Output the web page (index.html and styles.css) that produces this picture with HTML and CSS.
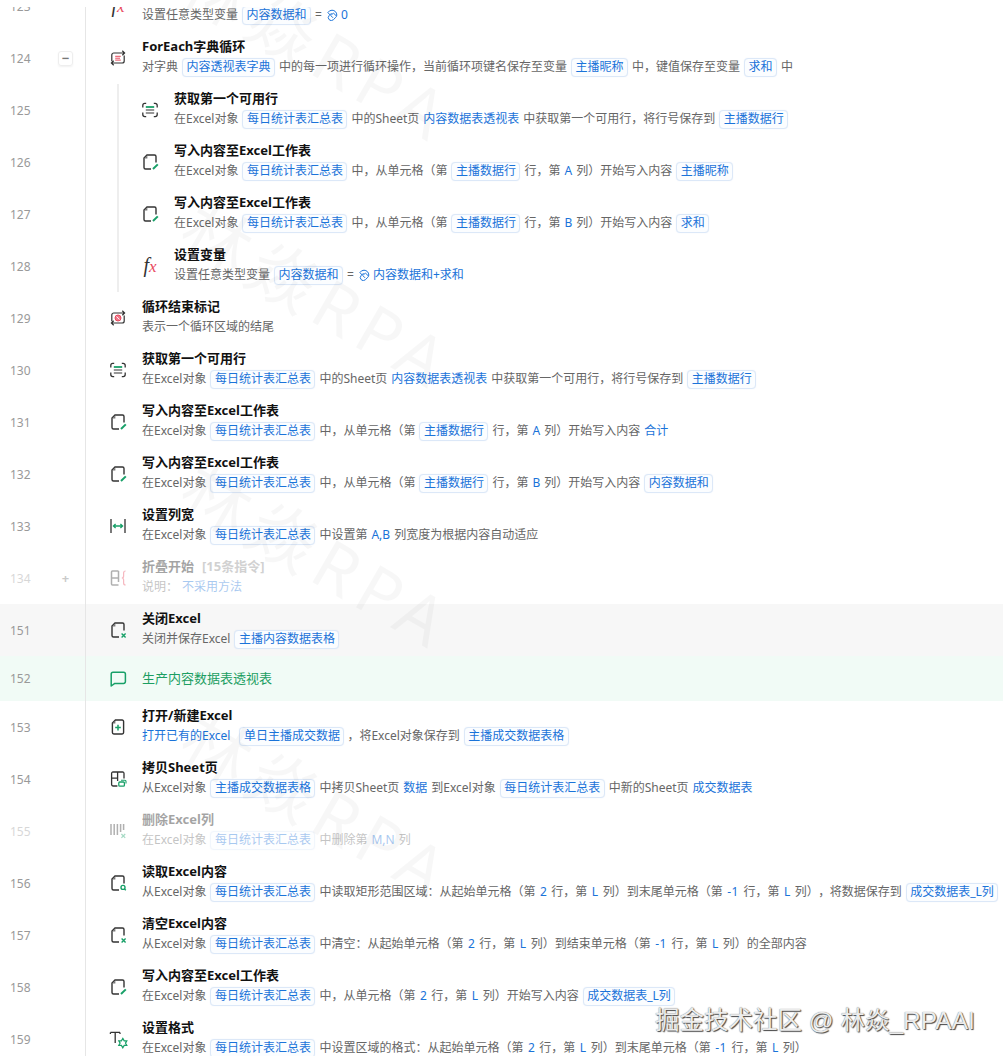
FILE: index.html
```html
<!DOCTYPE html>
<html lang="zh">
<head>
<meta charset="utf-8">
<title>流程指令列表</title>
<link rel="stylesheet" href="styles.css">
</head>
<body>
<svg class="sprite" xmlns="http://www.w3.org/2000/svg">
  <symbol id="swirl" viewBox="0 0 12 12"><path d="M6 1.200A4.800 4.800 0 0 1 10.800 6c0 .9-.4 1.700-1 2.300L7.400 10.700a3 3 0 0 1-4.200 0 3 3 0 0 1 0-4.200L5.600 4.100M6 1.200A4.800 4.800 0 0 0 1.900 3.600L4.200 6M10 6.600 7.400 4 4.800 6.600 7 8.800" fill="none" stroke="#1a73d9" stroke-width="1"/></symbol>
  <symbol id="doc" viewBox="0 0 20 20"><path d="M11 17H5.500A1.500 1.500 0 0 1 4 15.500V6l3-3h7.500A1.500 1.500 0 0 1 16 4.500V10.500" fill="none" stroke="#333" stroke-width="1.400"/><path d="M4.200 6.400 7.400 3.200V6.400z" fill="#777"/></symbol>
  <symbol id="doc-pen" viewBox="0 0 20 20"><use href="#doc"/><path d="M13 17 17.800 12.400" stroke="#18a068" stroke-width="2"/></symbol>
  <symbol id="doc-x" viewBox="0 0 20 20"><use href="#doc"/><path d="M13.600 13.400 17.600 17.400M17.600 13.400 13.600 17.400" stroke="#18a068" stroke-width="1.400"/></symbol>
  <symbol id="doc-q" viewBox="0 0 20 20"><use href="#doc"/><circle cx="15" cy="14.400" r="2" fill="none" stroke="#18a068" stroke-width="1.400"/><path d="M16.500 15.900 17.800 17.200" stroke="#18a068" stroke-width="1.400"/></symbol>
  <symbol id="doc-plus" viewBox="0 0 20 20"><path d="M7.400 3H14.200A1.400 1.400 0 0 1 15.600 4.400V15.600A1.400 1.400 0 0 1 14.200 17H5.800A1.400 1.400 0 0 1 4.400 15.600V6z" fill="none" stroke="#333" stroke-width="1.400"/><path d="M4.600 6.400 7.400 3.400V6.400z" fill="#777"/><path d="M10 7.800v5.600M7.200 10.600h5.600" stroke="#18a068" stroke-width="1.500"/></symbol>
  <symbol id="sheet" viewBox="0 0 20 20"><path d="M9.400 17H5A1.400 1.400 0 0 1 3.600 15.600V4.400A1.400 1.400 0 0 1 5 3h9.600A1.400 1.400 0 0 1 16 4.400V9.600M3.800 9.200H9.600M9.600 3.200V12" fill="none" stroke="#333" stroke-width="1.300"/><rect x="10.800" y="13" width="5.600" height="4.200" rx="1" fill="none" stroke="#18a068" stroke-width="1.300"/><path d="M13 11.200h3.800a1.200 1.200 0 0 1 1.200 1.200v2.200" fill="none" stroke="#18a068" stroke-width="1.100"/></symbol>
  <symbol id="loop" viewBox="0 0 20 20"><path d="M3.800 13.200V7a2 2 0 0 1 2-2H16.400M14.300 2.800 16.600 5 14.300 7.200M16.200 7.400V13a2 2 0 0 1-2 2H3.600M5.700 12.800 3.400 15l2.300 2.200" fill="none" stroke="#333" stroke-width="1.200"/><path d="M7.200 8.300h5.600M7.200 10.200h4.800M7.200 12.100h5.600" stroke="#e8485c" stroke-width="1"/></symbol>
  <symbol id="loop-end" viewBox="0 0 20 20"><path d="M3.800 13.200V7a2 2 0 0 1 2-2H16.400M14.300 2.800 16.600 5 14.300 7.200M16.200 7.400V13a2 2 0 0 1-2 2H3.600M5.700 12.800 3.400 15l2.300 2.200" fill="none" stroke="#333" stroke-width="1.200"/><circle cx="10" cy="10" r="3" fill="#f0778a" stroke="#e8485c"/><path d="M8.500 8.500l3 3" stroke="#fff" stroke-width=".9"/></symbol>
  <symbol id="scan" viewBox="0 0 20 20"><path d="M2.800 7.400V5.400A2 2 0 0 1 4.800 3.400H6.200M13.800 3.400h1.400a2 2 0 0 1 2 2V7.400M2.800 12.600v2a2 2 0 0 0 2 2H6.200M13.800 16.600h1.400a2 2 0 0 0 2-2V12.600" fill="none" stroke="#333" stroke-width="1.300"/><path d="M5.800 7h8.400" stroke="#18a068" stroke-width="1.800"/><path d="M5.800 10h8.400M5.800 13h8.400" stroke="#333" stroke-width="1.200"/></symbol>
  <symbol id="width" viewBox="0 0 20 20"><path d="M3 3v14M17 3v14" stroke="#333" stroke-width="1.300"/><path d="M5.400 10h9.200M7.600 8 5.400 10l2.200 2M12.400 8l2.200 2-2.200 2" fill="none" stroke="#18a068" stroke-width="1.300"/></symbol>
  <symbol id="fold" viewBox="0 0 20 20"><path d="M10.500 3H4.500A1 1 0 0 0 3.500 4V16a1 1 0 0 0 1 1H10.500M3.500 10H10.500M10.500 3V10M10.500 10V14" fill="none" stroke="#333" stroke-width="1.500"/><path d="M17.600 3c-1.500 0-2 .6-2 2v3c0 1-.6 2-1.800 2 1.200 0 1.800 1 1.800 2v3c0 1.400.5 2 2 2" fill="none" stroke="#e8485c" stroke-width="1.200"/></symbol>
  <symbol id="delcol" viewBox="0 0 20 20"><path d="M3 3v11M6.200 3v11M9.400 3v11M12.600 3v8M15.600 3v6" stroke="#333" stroke-width="1.500"/><path d="M13.400 13l3.800 3.800M17.200 13l-3.800 3.800" stroke="#18a068" stroke-width="1.200"/></symbol>
  <symbol id="comment" viewBox="0 0 20 20"><path d="M5 3.200h10.600a1.800 1.800 0 0 1 1.800 1.800v7.600a1.800 1.800 0 0 1-1.800 1.800H6.800L3.200 17V5A1.800 1.800 0 0 1 5 3.200z" fill="none" stroke="#18a068" stroke-width="1.500" stroke-linejoin="round"/></symbol>
  <symbol id="format" viewBox="0 0 20 20"><path d="M2.400 3.400h9.600M2.400 3.400v1.600M12 3.400v1.600M7.200 3.400V14" fill="none" stroke="#333" stroke-width="1.300"/><path d="M14.800 9.400l1.400 2.400h2.600l-1.300 2.300 1.300 2.300h-2.600l-1.400 2.400-1.400-2.400h-2.600l1.300-2.300-1.300-2.300h2.600z" fill="none" stroke="#18a068" stroke-width="1.200"/></symbol>
</svg>

<main class="viewport">
  <div class="list">

    <div class="row">
      <div class="gutter"><span class="num">123</span></div>
      <div class="ico"><span class="fx"><i>f</i><b>x</b></span></div>
      <div class="content">
        <div class="title">设置变量</div>
        <div class="desc">设置任意类型变量<span class="tag">内容数据和</span><span class="eq">=</span><svg class="swirl"><use href="#swirl"/></svg><span class="val tight">0</span></div>
      </div>
    </div>

    <div class="row">
      <div class="gutter"><span class="num">124</span><span class="toggle boxed">−</span></div>
      <div class="ico"><svg class="icon"><use href="#loop"/></svg></div>
      <div class="content">
        <div class="title">ForEach字典循环</div>
        <div class="desc">对字典<span class="tag">内容透视表字典</span>中的每一项进行循环操作，当前循环项键名保存至变量<span class="tag">主播昵称</span>中，键值保存至变量<span class="tag">求和</span>中</div>
      </div>
    </div>

    <div class="row nested">
      <div class="gutter"><span class="num">125</span></div>
      <div class="ico"><svg class="icon"><use href="#scan"/></svg></div>
      <div class="content">
        <div class="title">获取第一个可用行</div>
        <div class="desc">在Excel对象<span class="tag">每日统计表汇总表</span>中的Sheet页<span class="val">内容数据表透视表</span>中获取第一个可用行，将行号保存到<span class="tag">主播数据行</span></div>
      </div>
    </div>

    <div class="row nested">
      <div class="gutter"><span class="num">126</span></div>
      <div class="ico"><svg class="icon"><use href="#doc-pen"/></svg></div>
      <div class="content">
        <div class="title">写入内容至Excel工作表</div>
        <div class="desc">在Excel对象<span class="tag">每日统计表汇总表</span>中，从单元格（第<span class="tag">主播数据行</span>行，第<span class="val">A</span>列）开始写入内容<span class="tag">主播昵称</span></div>
      </div>
    </div>

    <div class="row nested">
      <div class="gutter"><span class="num">127</span></div>
      <div class="ico"><svg class="icon"><use href="#doc-pen"/></svg></div>
      <div class="content">
        <div class="title">写入内容至Excel工作表</div>
        <div class="desc">在Excel对象<span class="tag">每日统计表汇总表</span>中，从单元格（第<span class="tag">主播数据行</span>行，第<span class="val">B</span>列）开始写入内容<span class="tag">求和</span></div>
      </div>
    </div>

    <div class="row nested">
      <div class="gutter"><span class="num">128</span></div>
      <div class="ico"><span class="fx"><i>f</i><b>x</b></span></div>
      <div class="content">
        <div class="title">设置变量</div>
        <div class="desc">设置任意类型变量<span class="tag">内容数据和</span><span class="eq">=</span><svg class="swirl"><use href="#swirl"/></svg><span class="val tight">内容数据和+求和</span></div>
      </div>
    </div>

    <div class="row">
      <div class="gutter"><span class="num">129</span></div>
      <div class="ico"><svg class="icon"><use href="#loop-end"/></svg></div>
      <div class="content">
        <div class="title">循环结束标记</div>
        <div class="desc">表示一个循环区域的结尾</div>
      </div>
    </div>

    <div class="row">
      <div class="gutter"><span class="num">130</span></div>
      <div class="ico"><svg class="icon"><use href="#scan"/></svg></div>
      <div class="content">
        <div class="title">获取第一个可用行</div>
        <div class="desc">在Excel对象<span class="tag">每日统计表汇总表</span>中的Sheet页<span class="val">内容数据表透视表</span>中获取第一个可用行，将行号保存到<span class="tag">主播数据行</span></div>
      </div>
    </div>

    <div class="row">
      <div class="gutter"><span class="num">131</span></div>
      <div class="ico"><svg class="icon"><use href="#doc-pen"/></svg></div>
      <div class="content">
        <div class="title">写入内容至Excel工作表</div>
        <div class="desc">在Excel对象<span class="tag">每日统计表汇总表</span>中，从单元格（第<span class="tag">主播数据行</span>行，第<span class="val">A</span>列）开始写入内容<span class="val">合计</span></div>
      </div>
    </div>

    <div class="row">
      <div class="gutter"><span class="num">132</span></div>
      <div class="ico"><svg class="icon"><use href="#doc-pen"/></svg></div>
      <div class="content">
        <div class="title">写入内容至Excel工作表</div>
        <div class="desc">在Excel对象<span class="tag">每日统计表汇总表</span>中，从单元格（第<span class="tag">主播数据行</span>行，第<span class="val">B</span>列）开始写入内容<span class="tag">内容数据和</span></div>
      </div>
    </div>

    <div class="row">
      <div class="gutter"><span class="num">133</span></div>
      <div class="ico"><svg class="icon"><use href="#width"/></svg></div>
      <div class="content">
        <div class="title">设置列宽</div>
        <div class="desc">在Excel对象<span class="tag">每日统计表汇总表</span>中设置第<span class="val">A,B</span>列宽度为根据内容自动适应</div>
      </div>
    </div>

    <div class="row off">
      <div class="gutter"><span class="num">134</span><span class="toggle">+</span></div>
      <div class="ico"><svg class="icon"><use href="#fold"/></svg></div>
      <div class="content">
        <div class="title">折叠开始<span class="count">[15条指令]</span></div>
        <div class="desc">说明：<span class="val">不采用方法</span></div>
      </div>
    </div>

    <div class="row hover">
      <div class="gutter"><span class="num">151</span></div>
      <div class="ico"><svg class="icon"><use href="#doc-x"/></svg></div>
      <div class="content">
        <div class="title">关闭Excel</div>
        <div class="desc">关闭并保存Excel<span class="tag">主播内容数据表格</span></div>
      </div>
    </div>

    <div class="row note">
      <div class="gutter"><span class="num">152</span></div>
      <div class="ico"><svg class="icon"><use href="#comment"/></svg></div>
      <div class="note-text">生产内容数据表透视表</div>
    </div>

    <div class="row">
      <div class="gutter"><span class="num">153</span></div>
      <div class="ico"><svg class="icon"><use href="#doc-plus"/></svg></div>
      <div class="content">
        <div class="title">打开/新建Excel</div>
        <div class="desc"><span class="val flush">打开已有的Excel</span><span class="tag wide">单日主播成交数据</span>，将Excel对象保存到<span class="tag">主播成交数据表格</span></div>
      </div>
    </div>

    <div class="row">
      <div class="gutter"><span class="num">154</span></div>
      <div class="ico"><svg class="icon"><use href="#sheet"/></svg></div>
      <div class="content">
        <div class="title">拷贝Sheet页</div>
        <div class="desc">从Excel对象<span class="tag">主播成交数据表格</span>中拷贝Sheet页<span class="val">数据</span>到Excel对象<span class="tag">每日统计表汇总表</span>中新的Sheet页<span class="val">成交数据表</span></div>
      </div>
    </div>

    <div class="row off">
      <div class="gutter"><span class="num">155</span></div>
      <div class="ico"><svg class="icon"><use href="#delcol"/></svg></div>
      <div class="content">
        <div class="title">删除Excel列</div>
        <div class="desc">在Excel对象<span class="tag">每日统计表汇总表</span>中删除第<span class="val">M,N</span>列</div>
      </div>
    </div>

    <div class="row">
      <div class="gutter"><span class="num">156</span></div>
      <div class="ico"><svg class="icon"><use href="#doc-q"/></svg></div>
      <div class="content">
        <div class="title">读取Excel内容</div>
        <div class="desc">从Excel对象<span class="tag">每日统计表汇总表</span>中读取矩形范围区域：从起始单元格（第<span class="val cell">2</span>行，第<span class="val cell">L</span>列）到末尾单元格（第<span class="val neg">-1</span>行，第<span class="val cell">L</span>列）<span class="comma">，</span>将数据保存到<span class="tag">成交数据表_L列</span></div>
      </div>
    </div>

    <div class="row">
      <div class="gutter"><span class="num">157</span></div>
      <div class="ico"><svg class="icon"><use href="#doc-x"/></svg></div>
      <div class="content">
        <div class="title">清空Excel内容</div>
        <div class="desc">从Excel对象<span class="tag">每日统计表汇总表</span>中清空：从起始单元格（第<span class="val cell">2</span>行，第<span class="val cell">L</span>列）到结束单元格（第<span class="val neg">-1</span>行，第<span class="val cell">L</span>列）的全部内容</div>
      </div>
    </div>

    <div class="row">
      <div class="gutter"><span class="num">158</span></div>
      <div class="ico"><svg class="icon"><use href="#doc-pen"/></svg></div>
      <div class="content">
        <div class="title">写入内容至Excel工作表</div>
        <div class="desc">在Excel对象<span class="tag">每日统计表汇总表</span>中，从单元格（第<span class="val cell">2</span>行，第<span class="val cell">L</span>列）开始写入内容<span class="tag">成交数据表_L列</span></div>
      </div>
    </div>

    <div class="row">
      <div class="gutter"><span class="num">159</span></div>
      <div class="ico"><svg class="icon"><use href="#format"/></svg></div>
      <div class="content">
        <div class="title">设置格式</div>
        <div class="desc">在Excel对象<span class="tag">每日统计表汇总表</span>中设置区域的格式：从起始单元格（第<span class="val cell">2</span>行，第<span class="val cell">L</span>列）到末尾单元格（第<span class="val neg">-1</span>行，第<span class="val cell">L</span>列）</div>
      </div>
    </div>

  </div>
</main>

<div class="wm wm1">林焱RPA</div>
<div class="wm wm2">林焱RPA</div>
<div class="wm wm3">林焱RPA</div>
<div class="wm wm4">林焱RPA</div>
<div class="credit">掘金技术社区 @ 林焱_RPAAI</div>
</body>
</html>
```
FILE: styles.css
```css
* { box-sizing: border-box; }
html, body { margin: 0; padding: 0; background: #fff; }
body {
  width: 1003px;
  height: 1063px;
  overflow: hidden;
  position: relative;
  font-family: "Noto Sans", "Noto Sans CJK SC", sans-serif;
  font-size: 12px;
  color: #666;
}
.sprite { display: none; }
.viewport { margin-top: 7px; height: 1049px; overflow: hidden; }
.list { margin-top: -27px; }

.row { display: flex; height: 52px; position: relative; white-space: nowrap; }
.gutter {
  width: 86px;
  flex: none;
  display: flex;
  align-items: center;
  padding-left: 10px;
  border-right: 1px solid #e6e6e6;
  color: #999;
  font-size: 12px;
}
.num { width: 48px; flex: none; }
.toggle {
  width: 15px;
  height: 15px;
  display: flex;
  align-items: center;
  justify-content: center;
  font-size: 13px;
  font-weight: 700;
  color: #777;
  border-radius: 3px;
  border: 1px solid transparent;
}
.toggle.boxed { border-color: #eee; box-shadow: 0 1px 2px rgba(0,0,0,.06); }

.ico {
  width: 20px;
  flex: none;
  margin-left: 22px;
  margin-right: 14px;
  display: flex;
  align-items: center;
  justify-content: center;
}
.icon { width: 20px; height: 20px; display: block; }
.fx { font-family: "Liberation Serif", serif; font-size: 20px; line-height: 20px; color: #333; }
.fx i { font-style: italic; }
.fx b { font-style: italic; font-weight: 400; color: #e8485c; font-size: 17px; }

.content { padding-top: 4px; }
.title { height: 21px; line-height: 20px; font-size: 13px; font-weight: 700; color: #111; }
.desc { height: 20px; line-height: 20px; font-size: 12px; color: #666; display: flex; align-items: center; }
.tag {
  display: inline-block;
  height: 19px;
  line-height: 16px;
  padding: 0 3.5px;
  margin: 0 4px;
  color: #1a73d9;
  background: #fbfdff;
  border: 1px solid #dce8f8;
  border-radius: 4px;
  box-shadow: 0 0 1px rgba(30,110,220,.12);
}
.val { color: #1a73d9; margin: 0 4px; }
.val.tight { margin-left: 3px; margin-right: 0; }
.val.flush { margin-left: 0; }
.val.cell { margin: 0 4.5px; }
.val.neg { margin: 0 4.5px; letter-spacing: .5px; }
.comma { margin: 0 -.5px; }
.tag.wide { margin-left: 5px; margin-right: 3px; }
.eq { margin: 0 4px 0 0; }
.swirl { width: 12px; height: 12px; flex: none; }
.count { margin-left: 8px; font-weight: 700; color: #888; }

.nested .ico { margin-left: 54px; }
.nested::before {
  content: "";
  position: absolute;
  left: 117px;
  top: 0;
  bottom: 0;
  width: 2px;
  background: #eee;
}
.off .num, .off .toggle, .off .ico, .off .content { opacity: .38; }
.hover { background: #f7f7f7; }
.note { height: 45px; background: #f1fbf6; }
.note-text { font-size: 13px; line-height: 45px; color: #1c9e62; padding-bottom: 1px; }

.wm {
  position: absolute;
  font-size: 68px;
  letter-spacing: 8px;
  color: rgba(0,0,0,.03);
  transform: rotate(30deg);
  transform-origin: left top;
  pointer-events: none;
  white-space: nowrap;
  line-height: 1;
}
.wm1 { left: 205px; top: -56px; }
.wm2 { left: 205px; top: 191px; }
.wm3 { left: 205px; top: 451px; }
.wm4 { left: 205px; top: 701px; }

.credit {
  position: absolute;
  left: 655px;
  top: 1006px;
  font-family: "Liberation Sans", "Noto Sans CJK SC", sans-serif;
  font-size: 24.5px;
  line-height: 30px;
  color: #ececec;
  text-shadow: 1px 1px 1px #444, 0 0 1px #666;
  white-space: nowrap;
}
```
